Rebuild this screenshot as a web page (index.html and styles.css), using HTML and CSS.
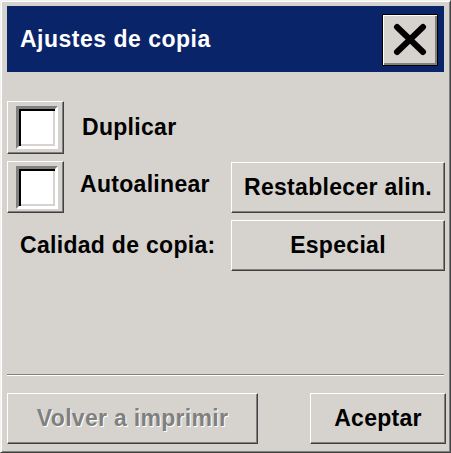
FILE: index.html
```html
<!DOCTYPE html>
<html lang="es">
<head>
<meta charset="utf-8">
<title>Ajustes de copia</title>
<link rel="stylesheet" href="styles.css">
</head>
<body>
<div class="window">
  <div class="titlebar">
    <span class="title">Ajustes de copia</span>
    <button class="close" type="button" aria-label="Cerrar">
      <svg width="34" height="33" viewBox="0 0 34 33"><path d="M4 4 L30 29 M30 4 L4 29" stroke="#000" stroke-width="6" stroke-linecap="round" fill="none"/></svg>
    </button>
  </div>
  <div class="form">
    <div class="check"><span class="well"></span></div>
    <div class="label">Duplicar</div>
    <div></div>
    <div class="check"><span class="well"></span></div>
    <div class="label label-auto">Autoalinear</div>
    <button class="btn" type="button">Restablecer alin.</button>
    <div class="label label-wide">Calidad de copia:</div>
    <button class="btn" type="button">Especial</button>
  </div>
  <div class="separator"></div>
  <div class="footer">
    <button class="btn btn-reprint" type="button" disabled>Volver a imprimir</button>
    <button class="btn btn-ok" type="button">Aceptar</button>
  </div>
</div>
</body>
</html>
```

FILE: styles.css
```css
html, body {
  margin: 0;
  padding: 0;
  background: #d6d3ce;
}

.window {
  box-sizing: border-box;
  width: 451px;
  height: 453px;
  background: #d6d3ce;
  border: 1px solid;
  border-color: #f2f2f2 #404040 #404040 #f2f2f2;
  box-shadow: inset 1px 1px 0 #ffffff, inset -1px -1px 0 #808080;
  padding: 5px 6px 0 6px;
  display: flex;
  flex-direction: column;
  font-family: "Liberation Sans", Arial, sans-serif;
  font-weight: bold;
  font-size: 23px;
  letter-spacing: 0.3px;
  color: #000;
}

.titlebar {
  height: 66px;
  background: #0a246a;
  display: flex;
  align-items: center;
  justify-content: space-between;
  padding: 0 6px 0 13px;
}

.title {
  color: #ffffff;
  font-size: 23px;
  letter-spacing: 0.5px;
}

.close {
  box-sizing: border-box;
  width: 56px;
  height: 52px;
  margin-top: 1px;
  padding: 0;
  background: #d6d3ce;
  border: 1px solid #000;
  box-shadow: inset 1px 1px 0 #ffffff, inset -2px -2px 0 #808080;
  display: flex;
  align-items: center;
  justify-content: center;
}

.close svg {
  display: block;
  margin: 0 1px 0 0;
}

.form {
  margin-top: 29px;
  margin-right: -1px;
  display: grid;
  grid-template-columns: 57px 1fr 214px;
  grid-template-rows: 53px 52px 51px;
  row-gap: 7px;
  align-items: center;
}

.check {
  box-sizing: border-box;
  height: 100%;
  border: 1px solid;
  border-color: #ffffff #404040 #404040 #ffffff;
  box-shadow: inset -1px -1px 0 #808080;
  display: flex;
  align-items: center;
  padding-left: 8px;
}

.well {
  box-sizing: border-box;
  width: 42px;
  height: 43px;
  background: #ffffff;
  border: 3px solid;
  border-color: #808080 #ffffff #ffffff #808080;
  box-shadow: inset 2px 2px 0 #000000, inset -2px -2px 0 #d6d3ce;
}

.label {
  padding-left: 18px;
}

.label-auto {
  padding-left: 16px;
  margin-top: -5px;
}

.label-wide {
  grid-column: 1 / 3;
  padding-left: 13px;
}

.btn {
  box-sizing: border-box;
  height: 51px;
  width: 100%;
  padding: 0;
  background: #d6d3ce;
  border: 1px solid;
  border-color: #ffffff #404040 #404040 #ffffff;
  box-shadow: inset -1px -1px 0 #808080;
  font-family: "Liberation Sans", Arial, sans-serif;
  font-weight: bold;
  font-size: 23px;
  letter-spacing: 0.3px;
  color: #000;
}

.separator {
  margin-top: 103px;
  height: 1px;
  background: #808080;
  border-bottom: 1px solid #ffffff;
}

.footer {
  margin-top: 17px;
  margin-right: -2px;
  display: flex;
  justify-content: space-between;
}

.btn-reprint {
  width: 251px;
  color: #808080;
  text-shadow: 1px 1px 0 #ffffff;
}

.btn-ok {
  width: 136px;
}
```
